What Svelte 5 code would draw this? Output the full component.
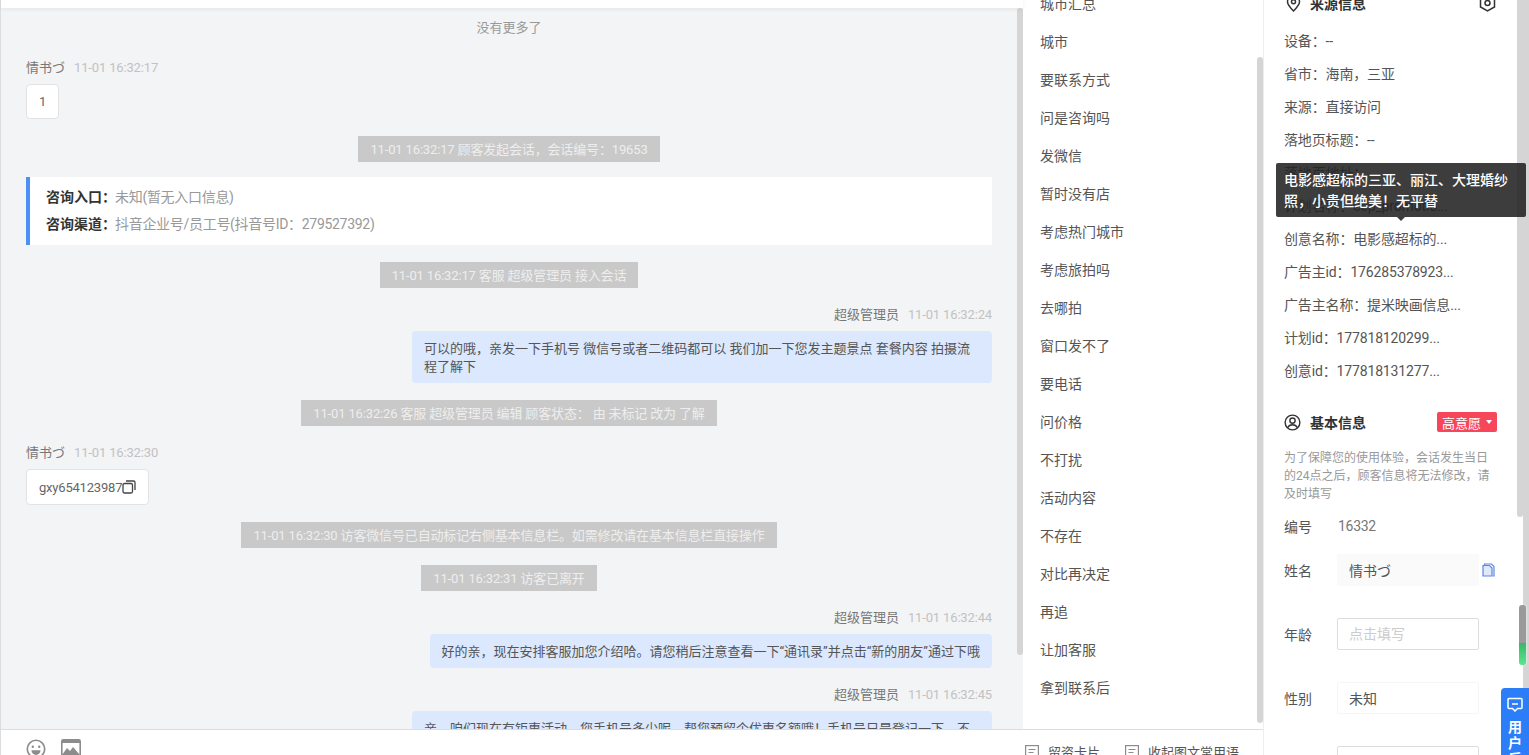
<script>
	const phrases = ['城市汇总', '城市', '要联系方式', '问是咨询吗', '发微信', '暂时没有店', '考虑热门城市', '考虑旅拍吗', '去哪拍', '窗口发不了', '要电话', '问价格', '不打扰', '活动内容', '不存在', '对比再决定', '再追', '让加客服', '拿到联系后'];
	const source = [
		'设备：--',
		'省市：海南，三亚',
		'来源：直接访问',
		'落地页标题：--',
		'落地页地址：',
		'计划名称：cep_promotio...',
		'创意名称：电影感超标的...',
		'广告主id：176285378923...',
		'广告主名称：提米映画信息...',
		'计划id：177818120299...',
		'创意id：177818131277...'
	];
</script>

<div class="page">
	<div class="main">
		<div class="body">
			<section class="chat-col">
				<div class="topbar"></div>
				<div class="chat-wrap">
					<div class="chat">
						<div class="more">没有更多了</div>

						<div class="msg">
							<div class="meta"><span class="name">情书づ</span><span class="time">11-01 16:32:17</span></div>
							<div class="bubble-in one">1</div>
						</div>

						<div class="notice">11-01 16:32:17 顾客发起会话，会话编号：19653</div>

						<div class="entry">
							<div><b>咨询入口：</b><span>未知(暂无入口信息)</span></div>
							<div><b>咨询渠道：</b><span>抖音企业号/员工号(抖音号ID：279527392)</span></div>
						</div>

						<div class="notice">11-01 16:32:17 客服 超级管理员 接入会话</div>

						<div class="msg mine">
							<div class="meta"><span class="name">超级管理员</span><span class="time">11-01 16:32:24</span></div>
							<div class="bubble-out">可以的哦，亲发一下手机号 微信号或者二维码都可以 我们加一下您发主题景点 套餐内容 拍摄流程了解下</div>
						</div>

						<div class="notice">11-01 16:32:26 客服 超级管理员 编辑 顾客状态： 由 未标记 改为 了解</div>

						<div class="msg">
							<div class="meta"><span class="name">情书づ</span><span class="time">11-01 16:32:30</span></div>
							<div class="bubble-in">
								gxy654123987
								<svg class="copy" viewBox="0 0 14 14" fill="none" stroke="#444" stroke-width="1.3">
									<rect x="1" y="3.5" width="9.5" height="9.5" rx="1.5" />
									<path d="M4 1h7.5A1.5 1.5 0 0 1 13 2.500V10" />
								</svg>
							</div>
						</div>

						<div class="notice">11-01 16:32:30 访客微信号已自动标记右侧基本信息栏。如需修改请在基本信息栏直接操作</div>
						<div class="notice">11-01 16:32:31 访客已离开</div>

						<div class="msg mine">
							<div class="meta"><span class="name">超级管理员</span><span class="time">11-01 16:32:44</span></div>
							<div class="bubble-out">好的亲，现在安排客服加您介绍哈。请您稍后注意查看一下“通讯录”并点击“新的朋友”通过下哦</div>
						</div>

						<div class="msg mine">
							<div class="meta"><span class="name">超级管理员</span><span class="time">11-01 16:32:45</span></div>
							<div class="bubble-out">亲，咱们现在有钜惠活动，您手机号多少呢，帮您预留个优惠名额哦！手机号只是登记一下，不会打扰到您的哦</div>
						</div>
					</div>
					<div class="bar chat-bar"><span></span></div>
				</div>
			</section>

			<section class="phrases">
				<ul>
					{#each phrases as p}
						<li>{p}</li>
					{/each}
				</ul>
				<div class="bar phrase-bar"><span></span></div>
			</section>
		</div>

		<footer class="toolbar">
			<div class="tools">
				<svg class="emoji" viewBox="0 0 22 22" fill="none" stroke="#8c8c8c" stroke-width="1.800">
					<circle cx="11" cy="11" r="9.600" />
					<circle cx="7.500" cy="8.500" r="1.300" fill="#8c8c8c" stroke="none" />
					<circle cx="14.500" cy="8.500" r="1.300" fill="#8c8c8c" stroke="none" />
					<path d="M6 12.500h10a5 5 0 0 1-10 0z" fill="#8c8c8c" stroke="none" />
				</svg>
				<svg class="pic" viewBox="0 0 20 18" fill="none">
					<rect x="0.800" y="0.800" width="18.400" height="16.400" rx="1.500" stroke="#8c8c8c" stroke-width="1.600" />
					<path d="M1 1h18v3H1z" fill="#8c8c8c" />
					<path d="M1 16l5-7 3 3 3-4 7 8v1H1z" fill="#8c8c8c" />
				</svg>
			</div>
			<div class="actions">
				<span>
					<svg viewBox="0 0 14 14" fill="none" stroke="#8c8c8c" stroke-width="1.200"><rect x="0.600" y="0.600" width="12.800" height="12.800" /><path d="M3.500 4.500h7M3.500 7.500h5" /></svg>
					留资卡片
				</span>
				<span>
					<svg viewBox="0 0 14 14" fill="none" stroke="#8c8c8c" stroke-width="1.200"><rect x="0.600" y="0.600" width="12.800" height="12.800" /><path d="M3.500 4.500h7M3.500 7.500h5" /></svg>
					收起图文常用语
				</span>
			</div>
		</footer>
	</div>

	<aside class="info">
		<div class="info-inner">
			<div class="head source-head">
				<svg class="head-icon pin" viewBox="0 0 14 17" fill="none" stroke="#333" stroke-width="1.500">
					<path d="M7 16C3.500 12.500 1 10 1 6.800a6 6 0 0 1 12 0C13 10 10.500 12.500 7 16z" />
					<circle cx="7" cy="6.800" r="2" />
				</svg>
				<span>来源信息</span>
				<svg class="nut" viewBox="0 0 17 18" fill="none" stroke="#333" stroke-width="1.500">
					<path d="M8.500 1l7 4v8l-7 4-7-4V5z" />
					<circle cx="8.500" cy="9" r="2.500" />
				</svg>
			</div>
			<div class="source">
				{#each source as row}
					<div>{row}</div>
				{/each}
			</div>

			<div class="head basic-head">
				<svg class="head-icon" viewBox="0 0 18 18" fill="none" stroke="#333" stroke-width="1.500">
					<circle cx="9" cy="9" r="7.800" />
					<circle cx="9" cy="7" r="2.800" />
					<path d="M3.800 14.500c1-2.200 3-3.200 5.200-3.200s4.200 1 5.200 3.200" />
				</svg>
				<span>基本信息</span>
				<div class="intent">高意愿<i></i></div>
			</div>
			<p class="hint">为了保障您的使用体验，会话发生当日的24点之后，顾客信息将无法修改，请及时填写</p>

			<div class="field plain"><label for="code">编号</label><span id="code">16332</span></div>
			<div class="field">
				<label for="f-name">姓名</label>
				<input id="f-name" class="filled" value="情书づ" readonly />
				<svg class="doc" viewBox="0 0 13 14" fill="#dfe9fb" stroke="#5b86e5" stroke-width="1.200">
					<path d="M2.500 2.500V1h7L12 3.500V13h-1" fill="none" />
					<path d="M1 2.500h6.500L10 5v8H1z" />
				</svg>
			</div>
			<div class="field"><label for="f-age">年龄</label><input id="f-age" placeholder="点击填写" /></div>
			<div class="field"><label for="f-sex">性别</label><input id="f-sex" class="faint" value="未知" readonly /></div>
			<div class="field"><label for="f-more"></label><input id="f-more" /></div>
		</div>
		<div class="bar info-bar"><span></span></div>
		<div class="outer-bar"></div>

		<div class="tooltip">电影感超标的三亚、丽江、大理婚纱照，小贵但绝美！无平替</div>
		<div class="page-thumb"></div>
		<button class="feedback">
			<svg viewBox="0 0 16 16" fill="none" stroke="#fff" stroke-width="1.500">
				<path d="M2 2.500h12a1 1 0 0 1 1 1v8a1 1 0 0 1-1 1h-3.500L8 15l-2.500-2.500H2a1 1 0 0 1-1-1v-8a1 1 0 0 1 1-1z" />
				<path d="M5 8h6" />
			</svg>
			<span>用户反馈</span>
		</button>
	</aside>
</div>

<style>
	:global(body) {
		margin: 0;
		background: #fff;
	}

	.page {
		display: flex;
		height: 755px;
		overflow: hidden;
		font-family: Roboto, "Noto Sans CJK SC", sans-serif;
		font-size: 13px;
		color: #555;
	}

	.main {
		display: flex;
		flex-direction: column;
		box-sizing: border-box;
		width: 1263px;
		flex-shrink: 0;
		border-left: 1px solid #ddd;
	}

	.body {
		display: flex;
		height: 729px;
	}

	.toolbar {
		display: flex;
		justify-content: space-between;
		flex: 1;
		border-top: 1px solid #ddd;
		padding: 9px 24px 0 25px;
		overflow: hidden;
	}

	.tools {
		display: flex;
		gap: 15px;
		align-items: flex-start;
	}

	.emoji {
		width: 20px;
		height: 20px;
	}

	.pic {
		width: 20px;
		height: 18px;
	}

	.actions {
		display: flex;
		gap: 25px;
		padding-top: 5px;
	}

	.actions span {
		display: flex;
		gap: 9px;
		line-height: 18px;
	}

	.actions svg {
		width: 14px;
		height: 14px;
		margin-top: 1px;
	}

	/* chat */
	.chat-col {
		display: flex;
		flex-direction: column;
		width: 1022px;
		flex-shrink: 0;
		background: #f3f4f6;
		min-height: 0;
	}

	.topbar {
		height: 8px;
		flex-shrink: 0;
		background: #fff;
		box-shadow: 0 1px 5px rgba(0, 0, 0, 0.07);
		position: relative;
	}

	.chat-wrap {
		display: flex;
		flex: 1;
		min-height: 0;
	}

	.chat {
		flex: 1;
		min-width: 0;
		display: flex;
		flex-direction: column;
		gap: 17px;
		padding: 10px 25px 0 25px;
		overflow: hidden;
	}

	.more {
		text-align: center;
		height: 20px;
		line-height: 20px;
		color: #999;
		margin-bottom: 3px;
	}

	.msg {
		display: flex;
		flex-direction: column;
		align-items: flex-start;
		flex-shrink: 0;
		margin-top: -1px;
	}

	.msg.mine {
		align-items: flex-end;
	}

	.meta {
		display: flex;
		gap: 9px;
		height: 20px;
		line-height: 22px;
		margin-bottom: 7px;
	}

	.name {
		color: #777;
	}

	.time {
		color: #c2c2c2;
		letter-spacing: -0.15px;
	}

	.bubble-in {
		display: flex;
		align-items: center;
		box-sizing: border-box;
		height: 36px;
		padding: 0 12px;
		background: #fff;
		border: 1px solid #e3e3e3;
		border-radius: 4px;
		color: #666;
		letter-spacing: -0.2px;
	}

	.bubble-in.one {
		height: 35px;
	}

	.copy {
		width: 14px;
		height: 14px;
	}

	.bubble-out {
		box-sizing: border-box;
		max-width: 580px;
		padding: 9px 12px 7px;
		line-height: 18px;
		background: #dbe8fd;
		border-radius: 4px;
		color: #555;
		flex-shrink: 0;
	}

	.notice {
		align-self: center;
		flex-shrink: 0;
		height: 26px;
		line-height: 28px;
		padding: 0 12px;
		background: #c9c9c9;
		color: #eee;
		white-space: nowrap;
		letter-spacing: -0.15px;
	}

	.entry {
		flex-shrink: 0;
		margin-top: -2px;
		padding: 7px 16px 7px 16px;
		background: #fff;
		border-left: 4px solid #4a90f5;
		font-size: 14px;
		line-height: 27px;
		color: #999;
	}

	.entry b {
		color: #333;
	}

	.entry span {
		margin-left: -1px;
		letter-spacing: -0.3px;
	}

	.bar {
		width: 6px;
		flex-shrink: 0;
	}

	.bar span {
		display: block;
		background: #d5d5d5;
		border-radius: 3px;
	}

	.chat-bar span {
		height: 647px;
	}

	/* phrases */
	.phrases {
		display: flex;
		flex: 1;
		min-width: 0;
		background: #fff;
	}

	.phrases ul {
		flex: 1;
		list-style: none;
		margin: -15px 0 0;
		padding: 0 0 0 17px;
		font-size: 14px;
	}

	.phrases li {
		height: 38px;
		line-height: 38px;
		color: #555;
	}

	.phrase-bar span {
		margin-top: 57px;
		height: 666px;
	}

	/* right panel */
	.info {
		position: relative;
		display: flex;
		flex: 1;
		min-width: 0;
		background: #fff;
		font-size: 14px;
	}

	.info-inner {
		flex: 1;
		min-width: 0;
		box-sizing: border-box;
		border-left: 1px solid #eee;
		padding: 0 20px 0 20px;
		margin-top: -7px;
	}

	.head {
		display: flex;
		align-items: center;
		height: 20px;
		font-size: 14px;
		font-weight: 700;
		color: #333;
	}

	.head-icon {
		width: 17px;
		height: 17px;
		margin-right: 9px;
	}

	.pin {
		margin-left: 1px;
		margin-right: 8px;
	}

	.nut {
		width: 17px;
		height: 18px;
		margin-left: auto;
		margin-right: 1px;
	}

	.source {
		margin-top: 11px;
	}

	.source div {
		height: 33px;
		line-height: 35px;
		white-space: nowrap;
		letter-spacing: -0.15px;
	}

	.basic-head {
		margin-top: 25px;
	}

	.intent {
		margin-left: auto;
		display: flex;
		align-items: center;
		justify-content: center;
		gap: 5px;
		width: 60px;
		height: 20px;
		background: #f6465a;
		border-radius: 2px;
		color: #fff;
		font-size: 13px;
		font-weight: 400;
	}

	.intent i {
		width: 0;
		height: 0;
		border: 3.500px solid transparent;
		border-top: 4px solid #fff;
		border-bottom: 0;
	}

	.hint {
		margin: 17px 0 7px;
		font-size: 12px;
		line-height: 18px;
		color: #999;
	}

	.field {
		display: flex;
		align-items: center;
		height: 32px;
		margin-bottom: 32px;
	}

	.field.plain {
		margin-bottom: 12px;
	}

	.field label {
		width: 53px;
		flex-shrink: 0;
		color: #555;
	}

	.field.plain span {
		padding-left: 1px;
		color: #777;
		letter-spacing: -0.3px;
	}

	.field input {
		box-sizing: border-box;
		width: 142px;
		height: 32px;
		flex-shrink: 0;
		padding: 0 11px;
		border: 1px solid #ddd;
		border-radius: 2px;
		outline: none;
		background: #fff;
		color: #555;
		font: inherit;
	}

	.field input::placeholder {
		color: #ccc;
	}

	.field input.filled {
		border-color: #fafafa;
		background: #fafafa;
	}

	.field input.faint {
		border-color: #f6f6f6;
	}

	.doc {
		width: 13px;
		height: 14px;
		margin-left: 3px;
		flex-shrink: 0;
	}

	.info-bar span {
		height: 517px;
		border-radius: 0 0 3px 3px;
	}

	.outer-bar {
		width: 6px;
		flex-shrink: 0;
		background: #d5d5d5;
	}

	.tooltip {
		position: absolute;
		left: 13px;
		top: 163px;
		box-sizing: border-box;
		width: 250px;
		height: 54px;
		padding: 7px 8px 0;
		background: rgba(34, 34, 34, 0.88);
		border-radius: 2px;
		color: #fff;
		line-height: 21px;
		font-weight: 500;
	}

	.tooltip::after {
		content: '';
		position: absolute;
		left: 121px;
		bottom: -4px;
		border: 4px solid transparent;
		border-top-color: #3a3a3a;
		border-bottom: 0;
	}

	.page-thumb {
		position: absolute;
		right: 3px;
		top: 605px;
		width: 7px;
		height: 60px;
		border-radius: 3px;
		background: linear-gradient(#9a9a9a 0, #9a9a9a 63%, #35b968 63%, #5fe38a 100%);
		box-shadow: 0 0 3px rgba(255, 255, 255, 0.8);
	}

	.feedback {
		position: absolute;
		right: 0;
		top: 688px;
		display: flex;
		flex-direction: column;
		align-items: center;
		gap: 7px;
		width: 28px;
		height: 100px;
		padding: 8px 0 0;
		border: 0;
		border-radius: 4px 0 0 0;
		background: #2c7ef8;
		color: #fff;
		font: 700 14px/16px Roboto, "Noto Sans CJK SC", sans-serif;
	}

	.feedback svg {
		width: 16px;
		height: 16px;
		flex-shrink: 0;
	}

	.feedback span {
		width: 14px;
		word-break: break-all;
	}
</style>
